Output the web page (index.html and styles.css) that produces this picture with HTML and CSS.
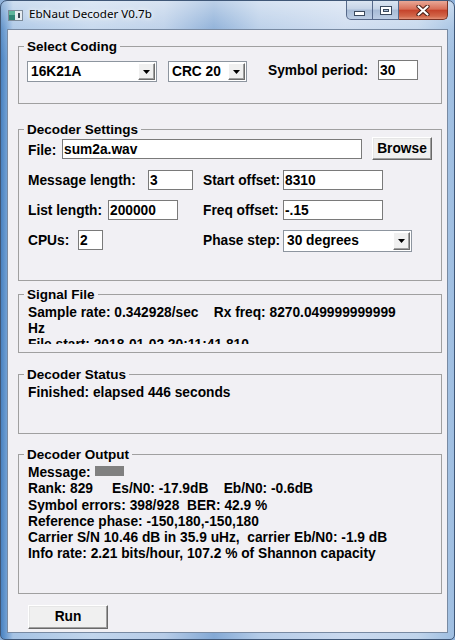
FILE: index.html
```html
<!DOCTYPE html>
<html>
<head>
<meta charset="utf-8">
<title>EbNaut Decoder V0.7b</title>
<link rel="stylesheet" href="styles.css">
</head>
<body>
<div class="window">
  <div class="titlebar">
    <svg class="appicon" width="15" height="11" viewBox="0 0 15 11">
      <rect x="0.5" y="0.5" width="14" height="10" fill="#e6ecf1" stroke="#7c8b99"/>
      <rect x="1" y="1" width="6" height="9" fill="#2f8576"/>
      <rect x="1" y="1" width="6" height="4" fill="#5fb59c"/>
      <rect x="10" y="3" width="2" height="5" fill="#3a4652"/>
    </svg>
    <span class="title">EbNaut Decoder V0.7b</span>
    <div class="caption">
      <div class="cbtn min">
        <svg width="11" height="5" viewBox="0 0 11 5"><rect x="0" y="0" width="11" height="5" fill="#3b4a5e"/><rect x="1" y="1" width="9" height="3" fill="#fff"/></svg>
      </div>
      <div class="cbtn max">
        <svg width="12" height="9" viewBox="0 0 12 9"><rect x="0" y="0" width="12" height="9" fill="#3b4a5e"/><rect x="1" y="1" width="10" height="7" fill="#fff"/><rect x="3" y="3" width="6" height="3" fill="#3b4a5e"/><rect x="4" y="4" width="4" height="1" fill="#a9bcd4"/></svg>
      </div>
      <div class="cbtn close">
        <svg width="14" height="11" viewBox="0 0 14 11"><path d="M2.5 1.5 L11.5 9.5 M11.5 1.5 L2.5 9.5" stroke="#4a2018" stroke-width="4.2" stroke-linecap="round"/><path d="M2.5 1.5 L11.5 9.5 M11.5 1.5 L2.5 9.5" stroke="#fff" stroke-width="2.2" stroke-linecap="round"/></svg>
      </div>
    </div>
  </div>

  <div class="client">
    <fieldset class="group g-coding">
      <legend>Select Coding</legend>
      <div class="coding-row">
        <div class="combo c-code"><span class="val">16K21A</span><span class="drop"><svg width="7" height="4" viewBox="0 0 7 4"><path d="M0 0H7L3.5 4Z" fill="#000"/></svg></span></div>
        <div class="combo c-crc"><span class="val">CRC 20</span><span class="drop"><svg width="7" height="4" viewBox="0 0 7 4"><path d="M0 0H7L3.5 4Z" fill="#000"/></svg></span></div>
        <span class="lbl l-sym">Symbol period:</span>
        <div class="edit e-sym">30</div>
      </div>
    </fieldset>

    <fieldset class="group g-settings">
      <legend>Decoder Settings</legend>
      <div class="settings">
        <div class="row-file">
          <span class="lbl l-file">File:</span>
          <div class="edit e-file">sum2a.wav</div>
          <div class="btn browse">Browse</div>
        </div>
        <div class="srow">
          <div class="lcell"><span class="lbl w120">Message length:</span><div class="edit e-msg">3</div></div>
          <div class="rcell"><span class="lbl w80">Start offset:</span><div class="edit e-off">8310</div></div>
        </div>
        <div class="srow">
          <div class="lcell"><span class="lbl w80">List length:</span><div class="edit e-list">200000</div></div>
          <div class="rcell"><span class="lbl w80">Freq offset:</span><div class="edit e-off">-.15</div></div>
        </div>
        <div class="srow">
          <div class="lcell"><span class="lbl w50">CPUs:</span><div class="edit e-cpu">2</div></div>
          <div class="rcell"><span class="lbl w80">Phase step:</span><div class="combo c-phase"><span class="val">30 degrees</span><span class="drop"><svg width="7" height="4" viewBox="0 0 7 4"><path d="M0 0H7L3.5 4Z" fill="#000"/></svg></span></div></div>
        </div>
      </div>
    </fieldset>

    <fieldset class="group g-signal">
      <legend>Signal File</legend>
      <div class="sig">Sample rate: 0.342928/sec    Rx freq: 8270.049999999999
Hz
File start: 2018-01-02 20:11:41.810</div>
    </fieldset>

    <fieldset class="group g-status">
      <legend>Decoder Status</legend>
      <div class="stat">Finished: elapsed 446 seconds</div>
    </fieldset>

    <fieldset class="group g-output">
      <legend>Decoder Output</legend>
      <div class="out">Message: <span class="msgbox"></span>
Rank: 829     Es/N0: -17.9dB    Eb/N0: -0.6dB
Symbol errors: 398/928  BER: 42.9 %
Reference phase: -150,180,-150,180
Carrier S/N 10.46 dB in 35.9 uHz,  carrier Eb/N0: -1.9 dB
Info rate: 2.21 bits/hour, 107.2 % of Shannon capacity</div>
    </fieldset>

    <div class="btn run">Run</div>
  </div>
</div>
</body>
</html>
```

FILE: styles.css
```css
* { box-sizing: border-box; }
html, body { margin: 0; padding: 0; }
body {
  width: 455px;
  height: 640px;
  overflow: hidden;
  background: #8fb2da;
  font-family: "Liberation Sans", Arial, sans-serif;
}

/* ---------- window frame ---------- */
.window {
  width: 455px;
  height: 640px;
  display: flex;
  flex-direction: column;
  padding: 0 6px 6px 6px;
  border: 1px solid #3f5777;
  border-radius: 7px 7px 5px 5px;
  background:
    linear-gradient(180deg, rgba(255,255,255,0.45) 0, rgba(255,255,255,0.12) 28px, rgba(255,255,255,0) 60px),
    linear-gradient(90deg, #4a82c0 0, #6a9bd1 5px, #a6c3e4 12px, #c1d5ec 20%, #b7cce7 36%, #84a9d5 47%, #b4cbe7 57%, #cad9ee 76%, #c0d4eb 92%, #9ebee1 100%);
}

.titlebar {
  height: 28px;
  flex: none;
  display: flex;
  align-items: flex-start;
}
.appicon { margin: 9px 0 0 1px; flex: none; }
.title {
  margin: 5px 0 0 6px;
  font-family: "Noto Sans", "Open Sans", sans-serif;
  font-size: 11.6px;
  line-height: 16px;
  color: #000;
  text-shadow: 0 0 4px #fff, 0 0 8px rgba(255,255,255,0.9);
}

.caption {
  margin-left: auto;
  display: flex;
  height: 19px;
}
.cbtn {
  height: 19px;
  display: flex;
  align-items: center;
  justify-content: center;
  border: 1px solid #56698a;
  border-top: 0;
}
.cbtn.min {
  width: 27px;
  border-radius: 0 0 0 5px;
  background: linear-gradient(180deg, #dbe5f1 0, #c5d3e6 45%, #a7bbd6 50%, #bccde4 100%);
}
.cbtn.min svg { margin-top: 6px; }
.cbtn.max {
  width: 26px;
  border-left: 0;
  background: linear-gradient(180deg, #dbe5f1 0, #c5d3e6 45%, #a7bbd6 50%, #bccde4 100%);
}
.cbtn.close {
  width: 49px;
  border-left: 0;
  border-color: #7a3426;
  border-radius: 0 0 5px 0;
  background: linear-gradient(180deg, #e9a897 0, #d86f58 45%, #c5442c 52%, #d2674a 85%, #e2927a 100%);
}

/* ---------- client area ---------- */
.client {
  flex: 1;
  background: #f1f0f4;
  border: 1px solid #788aa2;
  padding: 9px 0 0 10px;
  font: bold 13.75px "Liberation Sans", Arial, sans-serif;
  color: #000;
}

.group {
  margin: 0;
  padding: 0;
  width: 424px;
  min-width: 0;
  border: 1px solid #a0a0a0;
}
.group legend {
  margin-left: 5px;
  padding: 0 3px;
  height: 15px;
  line-height: 15px;
  font-size: 13.5px;
  font-weight: bold;
}
.g-coding { height: 65px; }
.g-settings { height: 159px; margin-top: 18px; }
.g-signal { height: 66px; margin-top: 6px; }
.g-status { height: 67px; margin-top: 14px; }
.g-output { height: 147px; margin-top: 13px; }

.lbl { line-height: 16.3px; white-space: nowrap; flex: none; }

.edit {
  height: 20px;
  flex: none;
  background: #fff;
  border: 1px solid #7a7a7a;
  padding: 1px 1px 0;
  line-height: 18px;
  overflow: hidden;
  white-space: nowrap;
}

.combo {
  height: 21px;
  flex: none;
  display: flex;
  background: #fff;
  border: 1px solid #8d959f;
}
.combo .val {
  flex: 1;
  padding-left: 3px;
  line-height: 19px;
  white-space: nowrap;
  overflow: hidden;
}
.drop {
  width: 17px;
  margin: 1px;
  background: #f0f0f0;
  border: 1px solid;
  border-color: #fff #6d6d6d #6d6d6d #fff;
  box-shadow: inset -1px -1px #a0a0a0;
  display: flex;
  align-items: center;
  justify-content: center;
}

.btn {
  flex: none;
  background: #f0f0f0;
  border: 1px solid;
  border-color: #fff #696969 #696969 #fff;
  box-shadow: inset -1px -1px #a0a0a0, inset 1px 1px #e6e6e6;
  text-align: center;
}

/* Select Coding */
.coding-row {
  display: flex;
  align-items: flex-start;
  padding: 6px 0 0 8px;
}
.c-code { width: 130px; margin-top: 1px; }
.c-crc { width: 79px; margin: 1px 0 0 11px; }
.l-sym { width: 110px; margin: 3px 0 0 21px; }
.e-sym { width: 40px; }

/* Decoder Settings */
.settings { padding-left: 9px; }
.row-file { display: flex; align-items: flex-start; }
.l-file { width: 34px; margin-top: 6px; }
.e-file { width: 300px; margin-top: 2px; }
.browse { width: 60px; height: 23px; margin-left: 10px; line-height: 21px; }

.srow { display: flex; align-items: baseline; margin-top: 10px; }
.lcell { width: 175px; display: flex; align-items: baseline; }
.rcell { display: flex; align-items: baseline; }
.w120 { width: 120px; }
.w80 { width: 80px; }
.w50 { width: 50px; }
.e-msg { width: 45px; }
.e-list { width: 70px; }
.e-cpu { width: 25px; }
.e-off { width: 100px; }
.c-phase { width: 129px; height: 22px; }
.c-phase .val { line-height: 20px; }

/* Signal File */
.sig {
  margin-top: 3px;
  height: 39px;
  overflow: hidden;
  padding-left: 9px;
  line-height: 16px;
  white-space: pre;
}

/* Decoder Status */
.stat { padding: 3px 0 0 9px; line-height: 16.3px; }

/* Decoder Output */
.out {
  padding: 3px 0 0 9px;
  line-height: 16.25px;
  white-space: pre;
}
.msgbox {
  display: inline-block;
  width: 29px;
  height: 10px;
  background: #808080;
  vertical-align: 1px;
}

.run {
  width: 80px;
  height: 24px;
  margin: 11px 0 0 10px;
  line-height: 22px;
}
```
